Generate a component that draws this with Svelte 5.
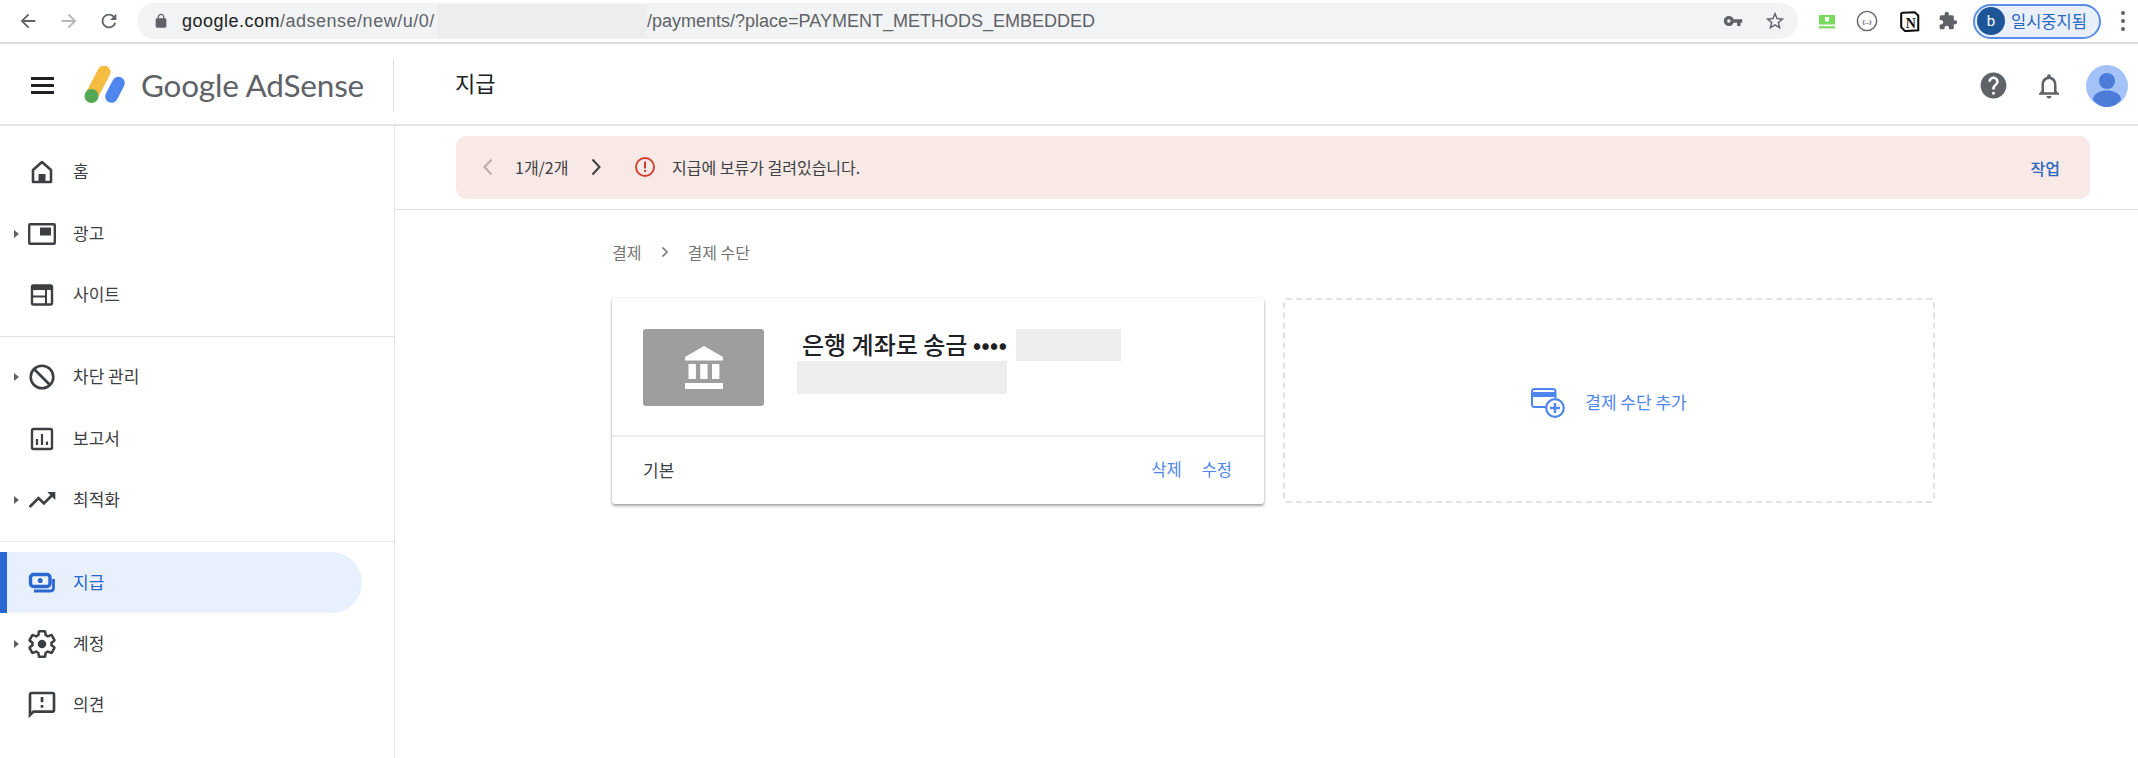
<script>
  const p = {
    back: "M20 11H7.83l5.59-5.59L12 4l-8 8 8 8 1.41-1.41L7.83 13H20v-2z",
    reload: "M17.65 6.35A7.958 7.958 0 0 0 12 4c-4.42 0-7.99 3.58-7.99 8s3.57 8 7.99 8c3.73 0 6.84-2.55 7.73-6h-2.08A5.99 5.99 0 0 1 12 18c-3.31 0-6-2.69-6-6s2.69-6 6-6c1.66 0 3.14.69 4.22 1.78L13 11h7V4l-2.35 2.35z",
    lock: "M18 8h-1V6c0-2.76-2.24-5-5-5S7 3.24 7 6v2H6c-1.1 0-2 .9-2 2v10c0 1.1.9 2 2 2h12c1.1 0 2-.9 2-2V10c0-1.1-.9-2-2-2zM9 6c0-1.66 1.34-3 3-3s3 1.34 3 3v2H9V6z",
    key: "M12.65 10A5.99 5.99 0 0 0 7 6c-3.31 0-6 2.69-6 6s2.69 6 6 6a5.99 5.99 0 0 0 5.65-4H17v4h4v-4h2v-4H12.65zM7 14c-1.1 0-2-.9-2-2s.9-2 2-2 2 .9 2 2-.9 2-2 2z",
    star: "M22 9.24l-7.19-.62L12 2 9.19 8.63 2 9.24l5.46 4.73L5.82 21 12 17.27 18.18 21l-1.63-7.03L22 9.24zM12 15.4l-3.76 2.27 1-4.28-3.32-2.88 4.38-.38L12 6.1l1.71 4.04 4.38.38-3.32 2.88 1 4.28L12 15.4z",
    puzzle: "M20.5 11H19V7c0-1.1-.9-2-2-2h-4V3.5C13 2.12 11.88 1 10.5 1S8 2.12 8 3.5V5H4c-1.1 0-1.99.9-1.99 2v3.8H3.5c1.49 0 2.7 1.21 2.7 2.7s-1.21 2.7-2.7 2.7H2V20c0 1.1.9 2 2 2h3.8v-1.5c0-1.49 1.21-2.7 2.7-2.7 1.49 0 2.7 1.21 2.7 2.7V22H17c1.1 0 2-.9 2-2v-4h1.5c1.38 0 2.5-1.12 2.5-2.5S21.88 11 20.5 11z",
    help: "M12 2C6.48 2 2 6.48 2 12s4.48 10 10 10 10-4.48 10-10S17.52 2 12 2zm1 17h-2v-2h2v2zm2.07-7.75l-.9.92C13.45 12.9 13 13.5 13 15h-2v-.5c0-1.1.45-2.1 1.17-2.83l1.24-1.26c.37-.36.59-.86.59-1.41 0-1.1-.9-2-2-2s-2 .9-2 2H8c0-2.21 1.79-4 4-4s4 1.79 4 4c0 .88-.36 1.68-.93 2.25z",
    bell: "M12 22c1.1 0 2-.9 2-2h-4c0 1.1.9 2 2 2zm6-6v-5c0-3.07-1.63-5.64-4.5-6.32V4c0-.83-.67-1.5-1.5-1.5s-1.5.67-1.5 1.5v.68C7.64 5.36 6 7.92 6 11v5l-2 2v1h16v-1l-2-2zm-2 1H8v-6c0-2.48 1.51-4.5 4-4.5s4 2.02 4 4.5v6z",
    gear: "M19.14 12.94c.04-.3.06-.61.06-.94 0-.32-.02-.64-.07-.94l2.03-1.58a.49.49 0 0 0 .12-.61l-1.92-3.32a.488.488 0 0 0-.59-.22l-2.39.96c-.5-.38-1.03-.7-1.62-.94l-.36-2.54a.484.484 0 0 0-.48-.41h-3.84c-.24 0-.43.17-.47.41l-.36 2.54c-.59.24-1.13.57-1.62.94l-2.39-.96c-.22-.08-.47 0-.59.22L2.74 8.87c-.12.21-.08.47.12.61l2.03 1.58c-.05.3-.09.63-.09.94s.02.64.07.94l-2.03 1.58a.49.49 0 0 0-.12.61l1.92 3.32c.12.22.37.29.59.22l2.39-.96c.5.38 1.03.7 1.62.94l.36 2.54c.05.24.24.41.48.41h3.84c.24 0 .44-.17.47-.41l.36-2.54c.59-.24 1.13-.56 1.62-.94l2.39.96c.22.08.47 0 .59-.22l1.92-3.32c.12-.22.07-.47-.12-.61l-2.01-1.58z",
    feedback: "M20 2H4c-1.1 0-1.99.9-1.99 2L2 22l4-4h14c1.1 0 2-.9 2-2V4c0-1.1-.9-2-2-2zm0 14H5.17L4 17.17V4h16v12zm-9-4h2v2h-2zm0-6h2v4h-2z",
    trend: "M16 6l2.29 2.29-4.88 4.88-4-4L2 16.59 3.41 18l6-6 4 4 6.3-6.29L22 12V6z"
  };
  const groups = [
    [{ id: 'home', label: '홈' }, { id: 'ads', label: '광고', caret: true }, { id: 'sites', label: '사이트' }],
    [{ id: 'block', label: '차단 관리', caret: true }, { id: 'reports', label: '보고서' }, { id: 'trend', label: '최적화', caret: true }],
    [{ id: 'pay', label: '지급', active: true }, { id: 'gear', label: '계정', caret: true }, { id: 'feedback', label: '의견' }]
  ];
</script>

<div class="page">
  <div class="toolbar">
    <svg class="tb back" viewBox="0 0 24 24"><path d={p.back} /></svg>
    <svg class="tb fwd" viewBox="0 0 24 24"><path d={p.back} /></svg>
    <svg class="tb reload" viewBox="0 0 24 24"><path d={p.reload} /></svg>
    <div class="omni">
      <svg class="lock" viewBox="0 0 24 24"><path d={p.lock} /></svg>
      <span class="url host"><b>google.com</b>/adsense/new/u/0/</span>
      <span class="url-redact"></span>
      <span class="url">/payments/?place=PAYMENT_METHODS_EMBEDDED</span>
      <svg class="key" viewBox="0 0 24 24"><path d={p.key} /></svg>
      <svg class="star" viewBox="0 0 24 24"><path d={p.star} /></svg>
    </div>
    <svg class="ext green" viewBox="0 0 18 15">
      <rect x="1" y="1" width="16" height="9.5" fill="#7ad95c" />
      <rect x="7" y="3" width="4" height="4.5" fill="#fff" />
      <rect x="1" y="12.2" width="16" height="2.2" fill="#7ad95c" />
    </svg>
    <svg class="ext circ" viewBox="0 0 24 24">
      <circle cx="12" cy="12" r="10.5" fill="#fff" stroke="#666" stroke-width="1.6" />
      <text x="12" y="15" text-anchor="middle" class="circ-text">{'{...}'}</text>
    </svg>
    <svg class="ext notion" viewBox="0 0 24 24">
      <path d="M4 2 L18 1.5 L22 5 V22 L7 23 L2.5 18.5 V3 Z" fill="#fff" stroke="#111" stroke-width="2.4" />
      <text x="13.5" y="19" text-anchor="middle" class="notion-text">N</text>
    </svg>
    <svg class="ext puzzle" viewBox="0 0 24 24"><path d={p.puzzle} /></svg>
    <div class="profile">
      <span class="pf-avatar">b</span>
      <span class="pf-text">일시중지됨</span>
    </div>
    <div class="dots"><i></i><i></i><i></i></div>
  </div>

  <header class="top">
    <div class="brand">
      <div class="burger"><i></i><i></i><i></i></div>
      <svg class="logo" viewBox="0 0 42 37">
        <line x1="20" y1="6" x2="7.5" y2="30" stroke="#f4bd41" stroke-width="13" stroke-linecap="round" />
        <circle cx="7.5" cy="30" r="7" fill="#54a755" />
        <line x1="34.5" y1="17" x2="27.5" y2="30.5" stroke="#4f86ee" stroke-width="12.5" stroke-linecap="round" />
      </svg>
      <span class="wordmark">Google AdSense</span>
    </div>
    <h1>지급</h1>
    <div class="top-actions">
      <svg class="help" viewBox="0 0 24 24"><path d={p.help} /></svg>
      <svg class="bell" viewBox="0 0 24 24"><path d={p.bell} /></svg>
      <svg class="avatar" viewBox="0 0 42 42">
        <circle cx="21" cy="21" r="21" fill="#a3c2f7" />
        <circle cx="21" cy="16" r="8" fill="#4c7bd8" />
        <path d="M7 35 C7 28 15 25.5 21 25.5 S35 28 35 35 C31 39.5 26 42 21 42 S11 39.5 7 35 Z" fill="#4c7bd8" />
      </svg>
    </div>
  </header>

  <div class="body">
    <nav class="side">
      {#each groups as g, gi}
        <div class="group" class:first={gi === 0} class:last={gi === 2}>
          {#each g as it}
            <div class="item" class:active={it.active}>
              <span class="caret" class:on={it.caret}></span>
              <span class="ico">
                {#if it.id === 'home'}
                  <svg viewBox="0 0 32 32"><path d="M16 6 L25 14 V26 H7 V14 Z" fill="none" stroke="#3c4043" stroke-width="2.6" stroke-linejoin="round" /><rect x="12.5" y="18" width="7" height="8" fill="#3c4043" /></svg>
                {:else if it.id === 'ads'}
                  <svg viewBox="0 0 32 32"><rect x="3.2" y="6.2" width="25.6" height="19.6" rx="1" fill="none" stroke="#3c4043" stroke-width="2.4" /><rect x="14" y="9.5" width="11" height="8" fill="#3c4043" /></svg>
                {:else if it.id === 'sites'}
                  <svg viewBox="0 0 32 32"><rect x="6" y="6.5" width="20" height="19" rx="1.5" fill="none" stroke="#3c4043" stroke-width="2.4" /><rect x="6" y="6.5" width="20" height="4.5" fill="#3c4043" /><path d="M6 17.5 H20 M20 11 V25.5" stroke="#3c4043" stroke-width="2" fill="none" /></svg>
                {:else if it.id === 'block'}
                  <svg viewBox="0 0 32 32"><circle cx="16" cy="16" r="11.3" fill="none" stroke="#3c4043" stroke-width="2.6" /><path d="M8 8 L24 24" stroke="#3c4043" stroke-width="2.6" /></svg>
                {:else if it.id === 'reports'}
                  <svg viewBox="0 0 32 32"><rect x="6" y="6" width="20" height="20" rx="1.5" fill="none" stroke="#3c4043" stroke-width="2.4" /><path d="M11 16 V22 M16 11 V22 M21 18.5 V22" stroke="#3c4043" stroke-width="2.2" fill="none" /></svg>
                {:else if it.id === 'trend'}
                  <svg viewBox="0 0 24 24"><path d={p.trend} fill="#3c4043" /></svg>
                {:else if it.id === 'pay'}
                  <svg viewBox="0 0 32 32">
                    <rect x="4.5" y="7.5" width="19.5" height="12" rx="3" fill="none" stroke="#2a67d0" stroke-width="3.4" />
                    <ellipse cx="14.2" cy="13.5" rx="5" ry="3.4" fill="#fff" />
                    <circle cx="14.2" cy="13.5" r="2.6" fill="#2a67d0" />
                    <path d="M27.5 12 V21 Q27.5 24 24.5 24 H8" fill="none" stroke="#2a67d0" stroke-width="2.8" />
                  </svg>
                {:else if it.id === 'gear'}
                  <svg viewBox="0 0 24 24"><path d={p.gear} fill="none" stroke="#3c4043" stroke-width="1.9" /><circle cx="12" cy="12" r="3.2" fill="#3c4043" /></svg>
                {:else}
                  <svg viewBox="0 0 24 24"><path d={p.feedback} fill="#3c4043" /></svg>
                {/if}
              </span>
              <span class="label">{it.label}</span>
            </div>
          {/each}
        </div>
      {/each}
    </nav>

    <main class="main">
      <div class="banner-wrap">
        <div class="banner">
          <svg class="chev prev" viewBox="0 0 12 20"><path d="M9.5 2.5 L2.5 10 L9.5 17.5" /></svg>
          <span class="count">1개/2개</span>
          <svg class="chev next" viewBox="0 0 12 20"><path d="M2.5 2.5 L9.5 10 L2.5 17.5" /></svg>
          <svg class="alert" viewBox="0 0 22 22">
            <circle cx="11" cy="11" r="9" fill="none" stroke="#d23f31" stroke-width="1.9" />
            <rect x="10" y="5.5" width="2" height="7" fill="#d23f31" />
            <rect x="10" y="14" width="2" height="2" fill="#d23f31" />
          </svg>
          <span class="msg">지급에 보류가 걸려있습니다.</span>
          <span class="action">작업</span>
        </div>
      </div>

      <div class="content">
        <div class="crumbs">
          <span>결제</span>
          <svg viewBox="0 0 8 12"><path d="M1.5 1.5 L6 6 L1.5 10.5" /></svg>
          <span>결제 수단</span>
        </div>
        <div class="cards">
          <section class="card">
            <div class="card-top">
              <div class="bank">
                <svg viewBox="0 0 38 43">
                  <path d="M19 0 L38 11 V14.5 H0 V11 Z" fill="#fff" />
                  <rect x="3.5" y="18" width="7.4" height="15" fill="#fff" />
                  <rect x="15.2" y="18" width="7.4" height="15" fill="#fff" />
                  <rect x="27" y="18" width="7.4" height="15" fill="#fff" />
                  <rect x="0" y="37" width="38" height="6" fill="#fff" />
                </svg>
              </div>
              <div class="info">
                <div class="line1">
                  <span class="title">은행 계좌로 송금 ••••</span>
                  <span class="redact r1"></span>
                </div>
                <span class="redact r2"></span>
              </div>
            </div>
            <div class="card-bottom">
              <span class="default">기본</span>
              <span class="links"><span>삭제</span><span>수정</span></span>
            </div>
          </section>
          <section class="add">
            <svg class="add-ico" viewBox="0 0 34 30">
              <path d="M23 19 H3.5 Q1 19 1 16.5 V3.5 Q1 1 3.5 1 H22 Q24.5 1 24.5 3.5 V10" fill="none" stroke="#4f86ee" stroke-width="2" />
              <rect x="1" y="4" width="23.5" height="5" fill="#4f86ee" />
              <circle cx="24" cy="20" r="8.8" fill="#fff" stroke="#4f86ee" stroke-width="2.2" />
              <path d="M24 15 V25 M19 20 H29" stroke="#4f86ee" stroke-width="2.4" />
            </svg>
            <span>결제 수단 추가</span>
          </section>
        </div>
      </div>
    </main>
  </div>
</div>

<style>
  :global(body) { margin: 0; background: #fff; }
  .page {
    width: 2138px; height: 758px; overflow: hidden; display: flex; flex-direction: column;
    font-family: "Noto Sans CJK KR", "Noto Sans", sans-serif; color: #3c4043;
  }
  svg { display: block; flex: none; }

  /* browser toolbar */
  .toolbar { height: 42px; border-bottom: 2px solid #dcdcdc; display: flex; align-items: center; padding-left: 17px; flex: none; }
  .tb { width: 22px; height: 22px; fill: #5f6368; }
  .fwd { transform: scaleX(-1); margin-left: 19px; fill: #b4b6b9; }
  .reload { margin-left: 18px; }
  .omni {
    margin-left: 17px; width: 1661px; height: 36px; background: #f1f3f4; border-radius: 18px;
    display: flex; align-items: center; padding-left: 16px; box-sizing: border-box;
  }
  .lock { width: 16px; height: 16px; fill: #5f6368; }
  .url { font: 18px "Liberation Sans", sans-serif; color: #5f6368; white-space: nowrap; }
  .host { margin-left: 13px; width: 255px; flex: none; letter-spacing: 0.5px; }
  .url b { font-weight: 400; color: #202124; }
  .url-redact { width: 210px; height: 33px; background: #ededed; flex: none; }
  .key { width: 20px; height: 20px; fill: #5f6368; margin-left: auto; }
  .star { width: 22px; height: 22px; fill: #5f6368; margin-left: 21px; margin-right: 12px; }
  .ext { width: 20px; height: 20px; }
  .green { margin-left: 20px; width: 18px; height: 15px; }
  .circ { margin-left: 20px; width: 22px; height: 22px; }
  .circ-text { font: 700 6px "Liberation Sans", sans-serif; fill: #555; }
  .notion { margin-left: 21px; width: 21px; height: 21px; }
  .notion-text { font: 700 16px "Liberation Serif", serif; fill: #111; }
  .puzzle { margin-left: 18px; fill: #5f6368; }
  .profile {
    margin-left: 15px; width: 128px; height: 35px; box-sizing: border-box;
    border: 2px solid #5a8de8; border-radius: 18px; background: #e9f0fb;
    display: flex; align-items: center; padding-left: 2px;
  }
  .pf-avatar {
    width: 28px; height: 28px; border-radius: 50%; background: #1c5598; color: #fff;
    display: flex; align-items: center; justify-content: center; font: 15px Roboto, sans-serif; flex: none;
  }
  .pf-text { margin-left: 6px; font-size: 16.5px; color: #2a67c0; white-space: nowrap; }
  .dots { margin-left: 20px; display: flex; flex-direction: column; gap: 4px; }
  .dots i { width: 4px; height: 4px; border-radius: 50%; background: #5f6368; display: block; }

  /* app header */
  .top { height: 80px; border-bottom: 2px solid #e3e3e3; display: flex; align-items: center; flex: none; }
  .brand { width: 394px; height: 52px; border-right: 1px solid #dadce0; display: flex; align-items: center; padding-left: 31px; flex: none; margin-top: 3px; box-sizing: border-box; }
  .burger { width: 23px; display: flex; flex-direction: column; gap: 4.5px; flex: none; }
  .burger i { display: block; height: 2.5px; background: #202124; }
  .logo { width: 42px; height: 37px; margin-left: 30px; margin-top: -2px; }
  .wordmark { margin-left: 15px; font: 400 31.5px Lato, sans-serif; color: #5f6368; white-space: nowrap; letter-spacing: -0.2px; margin-bottom: 1px; }
  h1 { margin: 0 0 4px 61px; font-size: 22px; font-weight: 400; color: #202124; line-height: 1; }
  .top-actions { margin-left: auto; display: flex; align-items: center; margin-right: 10px; margin-top: 3px; }
  .help { width: 31px; height: 31px; fill: #5f6368; }
  .bell { width: 30px; height: 30px; fill: #5f6368; margin-left: 25px; }
  .avatar { width: 42px; height: 42px; margin-left: 22px; }

  /* sidebar */
  .body { flex: 1; display: flex; min-height: 0; }
  .side { width: 395px; flex: none; box-sizing: border-box; border-right: 1px solid #e3e3e3; }
  .group { padding: 10px 0; border-bottom: 1px solid #e3e3e3; }
  .group.first { padding-top: 15.5px; }
  .group.last { border-bottom: 0; }
  .item { height: 61.4px; display: flex; align-items: center; padding-left: 14px; box-sizing: border-box; width: 362px; }
  .item.active { background: #e8f0fd; border-left: 7px solid #2a67d0; padding-left: 7px; border-radius: 0 31px 31px 0; }
  .item.active .label { color: #2a67d0; }
  .caret { width: 12px; flex: none; }
  .caret.on::before { content: ""; display: block; width: 0; height: 0; border-left: 5px solid #5f6368; border-top: 4px solid transparent; border-bottom: 4px solid transparent; }
  .ico { width: 32px; height: 32px; flex: none; }
  .ico svg { width: 32px; height: 32px; }
  .label { margin-left: 15px; padding-bottom: 3px; font-size: 17px; color: #3c4043; white-space: nowrap; }

  /* main */
  .main { flex: 1; min-width: 0; }
  .banner-wrap { padding: 10px 48px 10px 61px; border-bottom: 1px solid #dfe0e6; }
  .banner { height: 63px; box-sizing: border-box; background: #f8e8e6; border-radius: 10px; display: flex; align-items: center; padding: 0 30px 2px 26px; }
  .chev { width: 12px; height: 20px; }
  .chev path { fill: none; stroke-width: 2; }
  .prev path { stroke: #b5aeac; }
  .next path { stroke: #3c4043; }
  .count { margin-left: 21px; font-size: 16px; color: #3c4043; width: 54px; white-space: nowrap; }
  .next { margin-left: 21px; }
  .alert { width: 22px; height: 22px; margin-left: 32px; }
  .msg { margin-left: 16px; font-size: 16px; color: #3c4043; white-space: nowrap; }
  .action { margin-left: auto; padding-top: 3px; font-size: 16px; font-weight: 500; color: #2a67c0; }

  .content { padding: 28px 0 0 217px; }
  .crumbs { display: flex; align-items: center; height: 28px; font-size: 16px; color: #757575; }
  .crumbs svg { width: 8px; height: 12px; margin: 0 18px 0 20px; }
  .crumbs path { fill: none; stroke: #757575; stroke-width: 1.6; }
  .cards { margin-top: 32px; display: grid; grid-template-columns: 652px 652px; column-gap: 19px; }
  .card { height: 206px; border-radius: 3px; box-shadow: 0 2px 3px rgba(0,0,0,.35), 0 0 2px rgba(0,0,0,.12); display: flex; flex-direction: column; background: #fff; }
  .card-top { height: 139px; box-sizing: border-box; border-bottom: 2px solid #ebebeb; display: flex; padding: 31px 0 0 31px; flex: none; }
  .bank { width: 121px; height: 77px; border-radius: 3px; background: #9e9e9e; display: flex; align-items: center; justify-content: center; flex: none; }
  .bank svg { width: 38px; height: 43px; }
  .info { margin-left: 33px; }
  .line1 { display: flex; height: 32px; align-items: center; }
  .title { margin-left: 5px; width: 214px; padding-bottom: 4px; font-size: 24px; font-weight: 500; color: #202124; white-space: nowrap; flex: none; }
  .redact { display: block; background: #ededed; }
  .r1 { width: 105px; height: 32px; }
  .r2 { width: 210px; height: 33px; }
  .card-bottom { flex: 1; display: flex; align-items: center; justify-content: space-between; padding: 0 32px 0 31px; }
  .default { color: #3c4043; font-size: 17px; padding-bottom: 3px; }
  .links { display: flex; gap: 20px; color: #4f86ee; font-size: 16.5px; padding-bottom: 3px; }
  .add {
    height: 205px; box-sizing: border-box; border: 2px dashed #e2e2e2; border-radius: 3px; padding-top: 4px;
    display: flex; align-items: center; justify-content: center; gap: 20px; color: #4f86ee; font-size: 17px;
  }
  .add-ico { width: 34px; height: 30px; }
  .add span { padding-bottom: 3px; }
</style>
